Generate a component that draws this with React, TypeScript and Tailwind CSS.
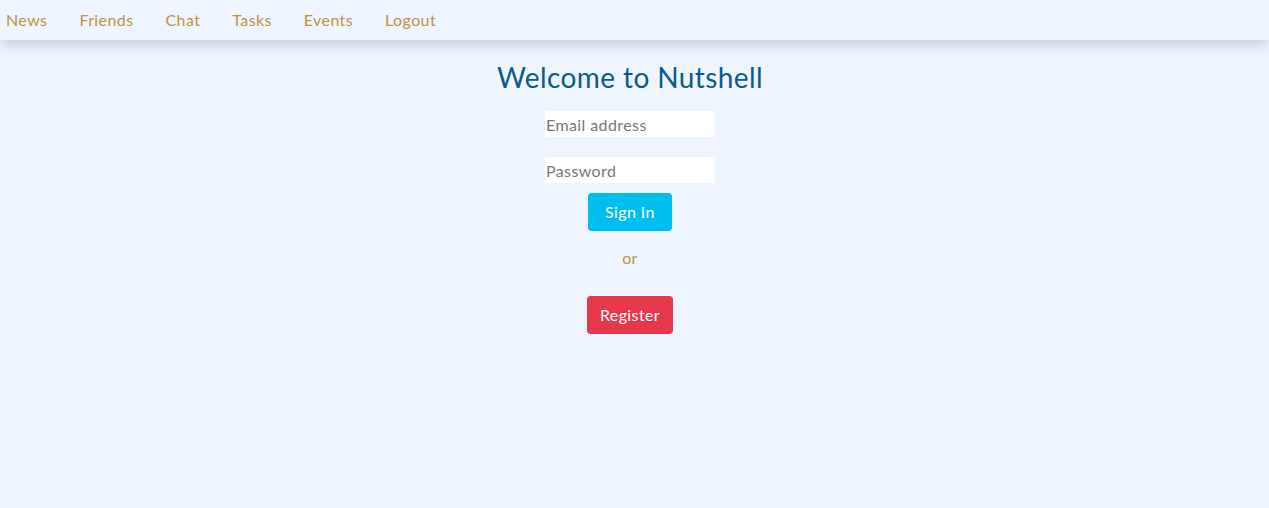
export default function App() {
  const links = ["News", "Friends", "Chat", "Tasks", "Events", "Logout"];
  return (
    <div
      className="min-h-[508px] bg-[#eef5ff] text-base tracking-[0.4px]"
      style={{ fontFamily: "Lato, 'Open Sans', sans-serif" }}
    >
      <nav className="h-10 bg-[#eef5ff] shadow-[0_4px_14px_rgba(0,0,0,0.18)] flex items-center pl-[6px] gap-[32px] relative z-10">
        {links.map((l) => (
          <a key={l} href="#" className="text-[#c0923e] text-[16px]">
            {l}
          </a>
        ))}
      </nav>
      <main className="flex flex-col items-center pr-[9px]">
        <h1 className="mt-[19px] text-[28px] leading-[36px] text-[#0b5a8e]">Welcome to Nutshell</h1>
        <input
          placeholder="Email address"
          className="mt-[16px] w-[170px] h-[26px] bg-white px-[1px] text-[16px] text-gray-700 placeholder:text-[#777] outline-none"
        />
        <input
          type="password"
          placeholder="Password"
          className="mt-[20px] w-[170px] h-[26px] bg-white px-[1px] text-[16px] text-gray-700 placeholder:text-[#777] outline-none"
        />
        <button className="mt-[10px] w-[84px] h-[38px] rounded-[4px] bg-[#00bfef] text-white text-[16px]">
          Sign In
        </button>
        <p className="mt-[16px] text-[#c0923e] text-[16px] leading-[22px]">or</p>
        <button className="mt-[27px] w-[86px] h-[38px] rounded-[4px] bg-[#e6374b] text-white text-[16px]">
          Register
        </button>
      </main>
    </div>
  );
}
